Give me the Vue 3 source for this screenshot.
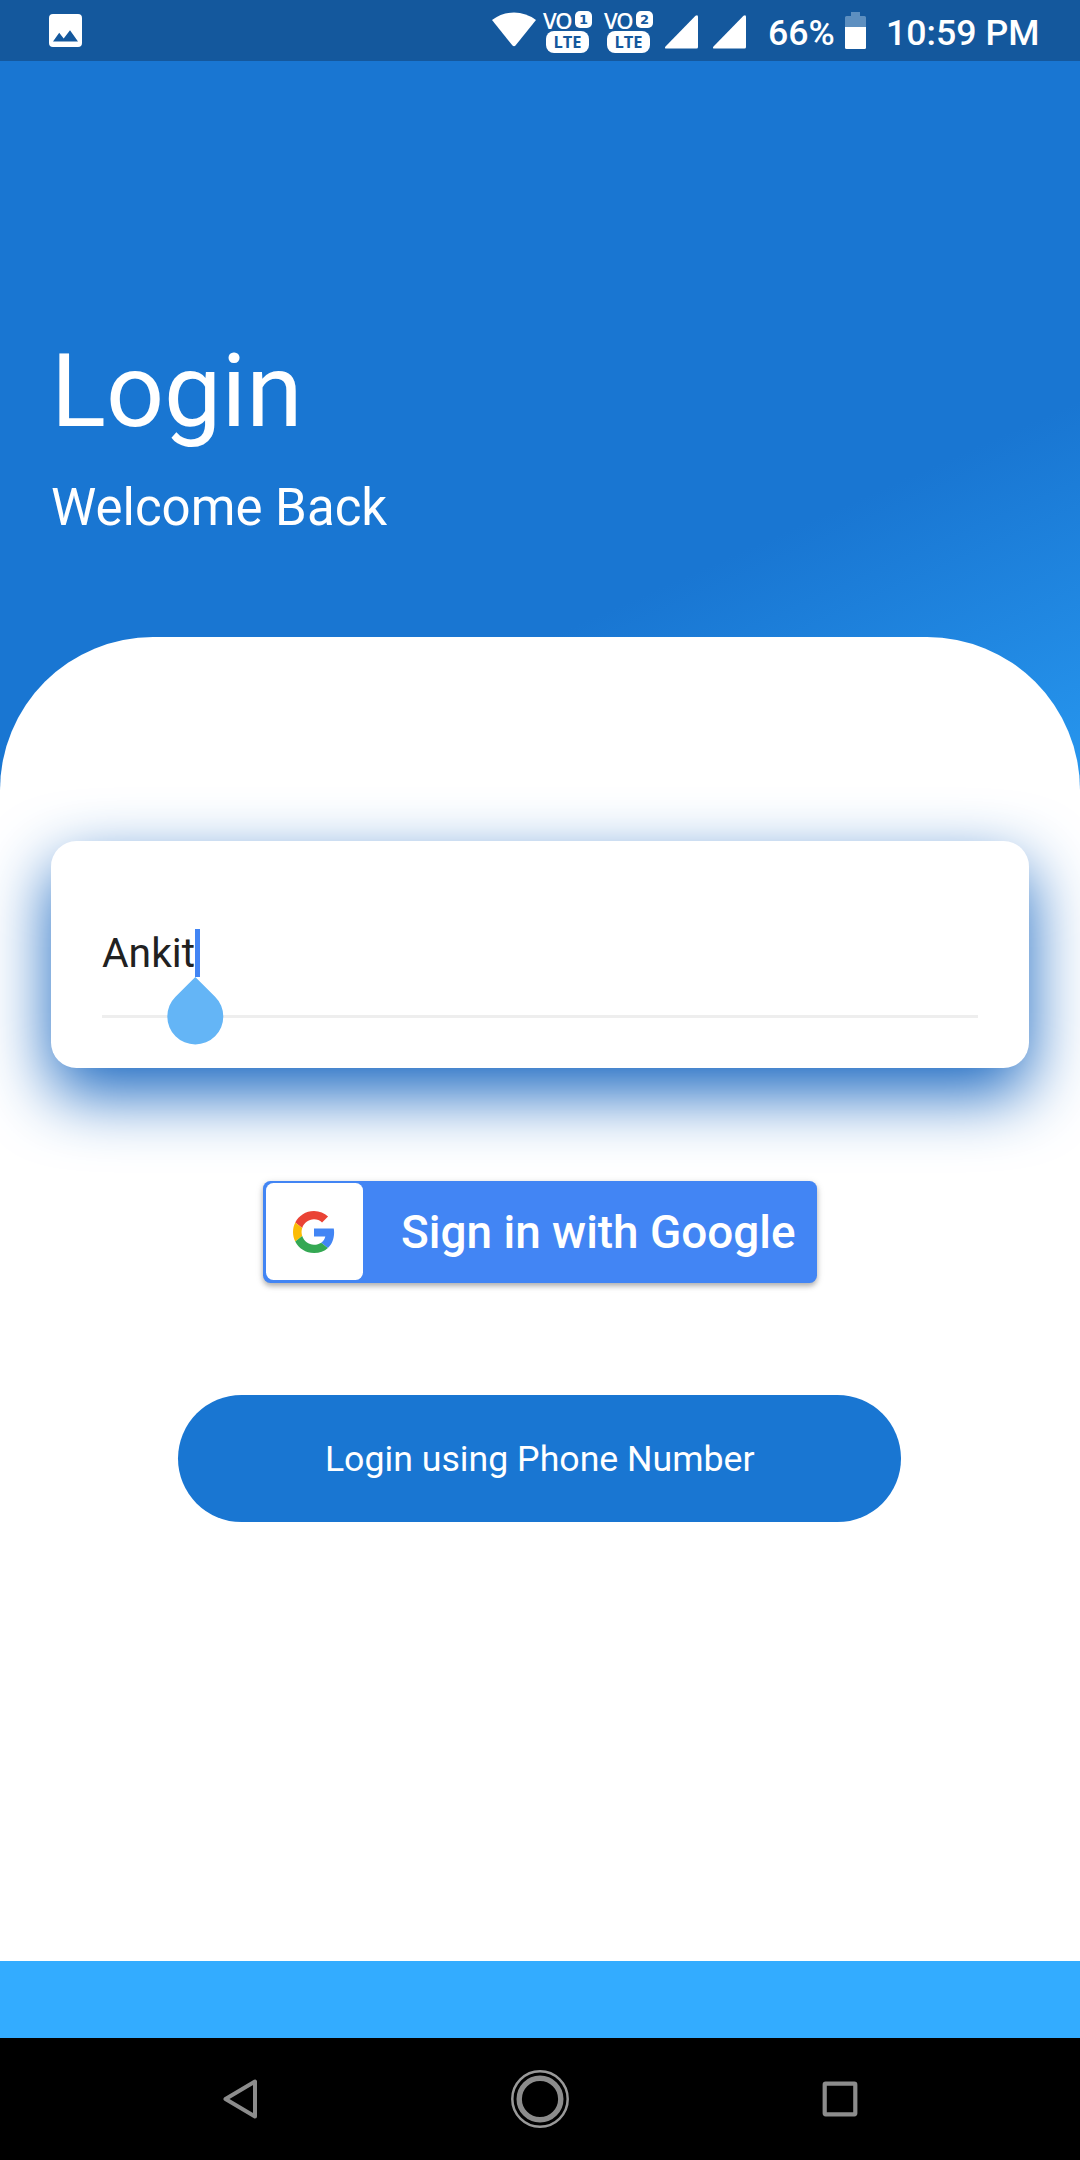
<script setup>
const sims = [1, 2]
</script>

<template>
  <div class="screen">
    <header class="status">
      <svg class="photo" width="33" height="33" viewBox="0 0 33 33">
        <path fill="#fff" fill-rule="evenodd" d="M4 0H29Q33 0 33 4V29Q33 33 29 33H4Q0 33 0 29V4Q0 0 4 0ZM4 27.500H29L21 16.300L14.700 24.500L10.200 18.800Z" />
      </svg>
      <div class="spacer"></div>
      <svg class="wifi" width="44" height="35" viewBox="0 0 44 35">
        <path fill="#fff" d="M0 8Q10 .5 22 .5T44 8L23.500 33.500Q22 35 20.500 33.500Z" />
      </svg>
      <div v-for="n in sims" :key="n" class="volte">
        <div class="vo"><span class="vo-text">VO</span><span class="num">{{ n }}</span></div>
        <div class="lte">LTE</div>
      </div>
      <svg v-for="n in sims" :key="'s' + n" class="signal" width="33" height="34" viewBox="0 0 33 34">
        <path fill="#fff" d="M.5 31.500L30.500 .8Q33 -.8 33 2V32Q33 33.500 31.500 33.500H1.200Q-.8 33.500 .5 31.500Z" />
      </svg>
      <span class="pct">66%</span>
      <svg class="battery" width="21" height="37" viewBox="0 0 21 37">
        <path fill="#5d8fc0" d="M6 0H15V4H19.500Q21 4 21 5.500V15H0V5.500Q0 4 1.500 4H6Z" />
        <path fill="#fff" d="M0 15H21V35.500Q21 37 19.500 37H1.500Q0 37 0 35.500Z" />
      </svg>
      <span class="clock">10:59 PM</span>
    </header>

    <section class="hero">
      <h1>Login</h1>
      <p>Welcome Back</p>
    </section>

    <main class="panel">
      <div class="card">
        <div class="field">
          <span>Ankit</span>
          <span class="caret">
            <svg class="handle" width="58" height="68" viewBox="0 0 58 68">
              <path fill="#64b5f6" d="M28.300 0L48.100 19.700A28 28 0 1 1 8.500 19.700Z" />
            </svg>
          </span>
        </div>
      </div>

      <button class="google">
        <span class="logo">
          <svg width="42" height="42" viewBox="0 0 48 48">
            <path fill="#EA4335" d="M24 9.500c3.540 0 6.710 1.220 9.210 3.600l6.850-6.850C35.900 2.380 30.470 0 24 0 14.620 0 6.510 5.380 2.560 13.220l7.980 6.190C12.430 13.720 17.740 9.500 24 9.500z" />
            <path fill="#4285F4" d="M46.980 24.550c0-1.570-.15-3.090-.38-4.550H24v9.020h12.940c-.58 2.960-2.260 5.480-4.780 7.180l7.730 6c4.510-4.180 7.090-10.360 7.090-17.650z" />
            <path fill="#FBBC05" d="M10.530 28.590c-.48-1.450-.76-2.990-.76-4.590s.27-3.140.76-4.590l-7.980-6.190C.92 16.460 0 20.120 0 24c0 3.880.92 7.540 2.560 10.780l7.970-6.190z" />
            <path fill="#34A853" d="M24 48c6.480 0 11.930-2.130 15.890-5.810l-7.730-6c-2.150 1.450-4.920 2.300-8.160 2.300-6.260 0-11.570-4.220-13.470-9.910l-7.980 6.190C6.510 42.620 14.620 48 24 48z" />
          </svg>
        </span>
        <span class="google-label">Sign in with Google</span>
      </button>

      <button class="phone">Login using Phone Number</button>
    </main>

    <div class="strip"></div>

    <nav class="nav">
      <svg width="60" height="60" viewBox="0 0 60 60" fill="none" stroke="#8c8c8c">
        <path stroke-width="4" stroke-linejoin="round" d="M45 12.500V47.500L15.500 30Z" />
      </svg>
      <svg width="60" height="60" viewBox="0 0 60 60" fill="none" stroke="#8c8c8c">
        <circle cx="30" cy="30" r="27.700" stroke-width="2.500" stroke="#999" />
        <circle cx="30" cy="30" r="20.800" stroke-width="5.400" />
      </svg>
      <svg width="60" height="60" viewBox="0 0 60 60" fill="none" stroke="#8c8c8c">
        <rect x="14.700" y="14.700" width="30.600" height="30.600" rx="1" stroke-width="4.200" />
      </svg>
    </nav>
  </div>
</template>

<style>
body {
  margin: 0;
}
</style>

<style scoped>
.screen {
  width: 1080px;
  height: 2160px;
  overflow: hidden;
  display: flex;
  flex-direction: column;
  font-family: Roboto, sans-serif;
  color: #fff;
  background: linear-gradient(156deg, #1976d2 805px, #2797ef 1160px);
}

.status {
  box-sizing: border-box;
  flex: none;
  height: 61px;
  display: flex;
  align-items: flex-start;
  padding-left: 49px;
  background: #14589d;
}

.photo {
  margin-top: 14px;
}

.spacer {
  width: 410px;
}

.wifi {
  margin-top: 12px;
}

.volte {
  width: 49px;
  margin: 11px 0 0 7px;
}

.volte + .volte {
  margin-left: 12px;
}

.vo {
  display: flex;
  height: 18px;
}

.vo-text {
  width: 32px;
  font: 600 22px/18px "Open Sans", sans-serif;
  letter-spacing: -1.500px;
}

.num {
  width: 17px;
  height: 17px;
  border-radius: 5px;
  background: #fff;
  color: #14589d;
  font: bold 13px/17px "DejaVu Sans", sans-serif;
  text-align: center;
}

.lte {
  width: 43px;
  height: 22px;
  margin: 2px 0 0 3px;
  border-radius: 8px;
  background: #fff;
  color: #14589d;
  font: bold 16.500px/22px "Open Sans", sans-serif;
  text-align: center;
}

.signal {
  margin: 14.500px 0 0 12px;
}

.signal + .signal {
  margin-left: 15px;
}

.pct,
.clock {
  font-size: 35.700px;
  font-weight: 500;
  line-height: 42px;
  margin-top: 12px;
  white-space: nowrap;
}

.pct {
  width: 64px;
  margin-left: 22px;
}

.battery {
  margin: 12px 0 0 13px;
}

.clock {
  margin-left: 20px;
}

.hero {
  box-sizing: border-box;
  flex: none;
  height: 576px;
  padding: 270px 51px 0;
}

h1 {
  margin: 0;
  font-size: 102px;
  font-weight: 400;
  line-height: 120px;
}

p {
  margin: 27px 0 0;
  font-size: 51px;
  line-height: 60px;
}

.panel {
  box-sizing: border-box;
  flex: none;
  height: 1324px;
  padding-top: 204.300px;
  display: flex;
  flex-direction: column;
  align-items: center;
  background: #fff;
  border-radius: 153px 153px 0 0;
}

.card {
  box-sizing: border-box;
  width: 978px;
  height: 227px;
  padding: 25.500px 51px;
  border-radius: 25.500px;
  background: #fff;
  box-shadow: 0 25.500px 66px #1565c0;
}

.field {
  box-sizing: border-box;
  height: 151px;
  padding-top: 62.200px;
  display: flex;
  align-items: flex-start;
  border-bottom: 3px solid #eee;
  color: #212121;
  font-size: 40.800px;
  line-height: 48px;
}

.caret {
  position: relative;
  width: 5px;
  height: 48px;
  background: #4285f4;
}

.handle {
  position: absolute;
  left: -28px;
  top: 48px;
}

button {
  border: 0;
  padding: 0;
  color: #fff;
  font-family: Roboto, sans-serif;
}

.google {
  width: 554px;
  height: 102px;
  margin-top: 112.400px;
  display: flex;
  align-items: center;
  border-radius: 7.500px;
  background: #4285f4;
  box-shadow: 0 3px 5px rgba(0, 0, 0, 0.24), 0 2px 8px rgba(0, 0, 0, 0.12);
}

.logo {
  width: 97px;
  height: 97px;
  margin-left: 2.700px;
  display: flex;
  align-items: center;
  justify-content: center;
  border-radius: 7.500px;
  background: #fff;
}

.google-label {
  margin-left: 38.300px;
  font-size: 45.900px;
  font-weight: 500;
  white-space: nowrap;
}

.phone {
  box-sizing: border-box;
  width: 723px;
  height: 127.500px;
  margin: 112px 0.500px 0 0;
  padding-top: 1px;
  border-radius: 64px;
  background: #1976d2;
  font-size: 35.700px;
}

.strip {
  flex: none;
  height: 77px;
  background: #33acff;
}

.nav {
  flex: 1;
  display: flex;
  align-items: center;
  justify-content: center;
  gap: 240px;
  background: #000;
}
</style>
